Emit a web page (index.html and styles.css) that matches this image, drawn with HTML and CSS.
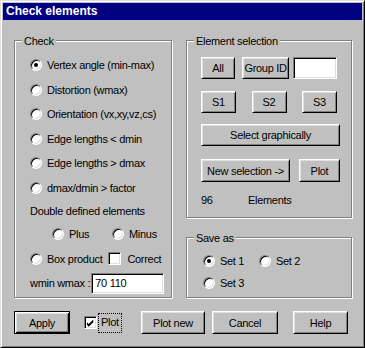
FILE: index.html
```html
<!DOCTYPE html>
<html lang="en">
<head>
  <meta charset="UTF-8" />
  <title>Check elements</title>
  <link rel="stylesheet" href="styles.css">
</head>
<body>
  <div class="window">
    <div class="titlebar">Check elements</div>
    <div class="client">
      <div class="panels">
        <div class="group check-group">
          <span class="legend">Check</span>
          <div class="row"><span class="radio checked"></span>Vertex angle (min-max)</div>
          <div class="row"><span class="radio"></span>Distortion (wmax)</div>
          <div class="row"><span class="radio"></span>Orientation (vx,xy,vz,cs)</div>
          <div class="row"><span class="radio"></span>Edge lengths &lt; dmin</div>
          <div class="row"><span class="radio"></span>Edge lengths &gt; dmax</div>
          <div class="row"><span class="radio"></span>dmax/dmin &gt; factor</div>
          <div class="row short">Double defined elements</div>
          <div class="row pair">
            <span class="opt"><span class="radio"></span>Plus</span>
            <span class="opt"><span class="radio"></span>Minus</span>
          </div>
          <div class="row"><span class="radio"></span>Box product<span class="check"></span>Correct</div>
          <div class="row"><span>wmin wmax :</span><span class="edit wmin">70 110</span></div>
        </div>

        <div class="side">
          <div class="group select-group">
            <span class="legend">Element selection</span>
            <div class="btn-row">
              <button class="btn all-btn">All</button>
              <button class="btn group-btn">Group ID</button>
              <span class="edit group-edit"></span>
            </div>
            <div class="btn-row sets">
              <button class="btn s-btn">S1</button>
              <button class="btn s-btn">S2</button>
              <button class="btn s-btn">S3</button>
            </div>
            <div class="btn-row graph-row">
              <button class="btn graph-btn">Select graphically</button>
            </div>
            <div class="btn-row new-row">
              <button class="btn new-btn">New selection -&gt;</button>
              <button class="btn plot-btn">Plot</button>
            </div>
            <div class="count-row"><span class="count">96</span>Elements</div>
          </div>

          <div class="group save-group">
            <span class="legend">Save as</span>
            <div class="row save-row">
              <span class="opt set-opt"><span class="radio checked"></span>Set 1</span>
              <span class="opt"><span class="radio"></span>Set 2</span>
            </div>
            <div class="row save-row">
              <span class="opt"><span class="radio"></span>Set 3</span>
            </div>
          </div>
        </div>
      </div>

      <div class="actions">
        <button class="btn default apply-btn">Apply</button>
        <span class="plot-toggle">
          <span class="check">
            <svg width="11" height="11" viewBox="0 0 11 11"><path d="M1 4 L3 6 L8 1 L8 4 L3 9 L1 7 Z" fill="#000"/></svg>
          </span>
          <span class="focus">Plot</span>
        </span>
        <button class="btn plotnew-btn">Plot new</button>
        <button class="btn cancel-btn">Cancel</button>
        <button class="btn help-btn">Help</button>
      </div>
    </div>
  </div>
</body>
</html>
```

FILE: styles.css
```css
body {
  margin: 0;
  background: #c0c0c0;
  font-family: "Liberation Sans", Arial, sans-serif;
  font-size: 11px;
  letter-spacing: -0.3px;
  color: #000;
}
.window {
  width: 365px;
  height: 348px;
  box-sizing: border-box;
  border: 1px solid;
  border-color: #dfdfdf #000 #000 #dfdfdf;
  box-shadow: inset 1px 1px #fff, inset -1px -1px #808080;
  padding: 2px;
}
.titlebar {
  height: 17px;
  line-height: 17px;
  padding-left: 3px;
  background: #000080;
  color: white;
  font-size: 12px;
  font-weight: bold;
  letter-spacing: 0;
}
.client {
  padding: 20px 10px 0 11px;
}
.panels {
  display: flex;
  gap: 14px;
}
.group {
  position: relative;
  box-sizing: border-box;
  border: 1px solid #808080;
  box-shadow: inset 1px 1px #fff, 1px 1px #fff;
}
.legend {
  position: absolute;
  top: -7px;
  left: 7px;
  padding: 0 2px;
  line-height: 14px;
  background: #c0c0c0;
}
.check-group {
  width: 158px;
  height: 258px;
  padding: 12px 0 0 15px;
}
.row {
  display: flex;
  align-items: center;
  height: 24.5px;
  white-space: nowrap;
}
.row.short { height: 22px; }
.opt {
  display: flex;
  align-items: center;
}
.pair .opt:first-child {
  margin-left: 22px;
  width: 60px;
}

/* radio buttons and check boxes */
.radio {
  flex: none;
  position: relative;
  width: 12px;
  height: 12px;
  box-sizing: border-box;
  margin-right: 5px;
  border-radius: 50%;
  background: white;
  border: 1px solid;
  border-color: #808080 #fff #fff #808080;
  box-shadow: inset 1px 1px #000, inset -1px -1px #dfdfdf;
}
.radio.checked::after {
  content: "";
  position: absolute;
  left: 3px;
  top: 3px;
  width: 4px;
  height: 4px;
  border-radius: 50%;
  background: #000;
}
.check {
  flex: none;
  display: inline-flex;
  width: 13px;
  height: 13px;
  box-sizing: border-box;
  background: white;
  border: 1px solid;
  border-color: #808080 #fff #fff #808080;
  box-shadow: inset 1px 1px #000, inset -1px -1px #dfdfdf;
  padding: 1px 0 0 1px;
}
.row .check {
  margin: 0 6px 0 6px;
}
.edit {
  display: flex;
  align-items: center;
  box-sizing: border-box;
  background: white;
  border: 1px solid;
  border-color: #808080 #fff #fff #808080;
  box-shadow: inset 1px 1px #000, inset -1px -1px #dfdfdf;
  padding-left: 3px;
}
.wmin {
  width: 73px;
  height: 21px;
  margin-left: 1px;
}

/* push buttons */
.btn {
  box-sizing: border-box;
  height: 22px;
  padding: 0;
  font: inherit;
  letter-spacing: inherit;
  white-space: nowrap;
  color: #000;
  background: #c0c0c0;
  border: 1px solid;
  border-color: #fff #000 #000 #fff;
  box-shadow: inset 1px 1px #dfdfdf, inset -1px -1px #808080;
}
.btn.default {
  border: 1px solid #000;
  box-shadow: inset 1px 1px #fff, inset -1px -1px #000, inset 2px 2px #dfdfdf, inset -2px -2px #808080;
}

.side {
  width: 166px;
  display: flex;
  flex-direction: column;
  gap: 19px;
}
.select-group {
  height: 178px;
  padding: 16px 0 0 14px;
}
.btn-row {
  display: flex;
}
.all-btn { width: 34px; }
.group-btn { width: 47px; margin-left: 7px; }
.group-edit { width: 44px; height: 22px; margin-left: 4px; }
.sets { margin-top: 12px; }
.s-btn { width: 35px; }
.s-btn + .s-btn { margin-left: 15.5px; }
.graph-row { margin-top: 11px; }
.graph-btn { width: 139px; }
.new-row { margin-top: 13px; }
.new-btn { width: 89px; height: 23px; }
.plot-btn { width: 41px; height: 23px; margin-left: 9px; }
.count-row {
  margin-top: 11px;
  line-height: 14px;
}
.count {
  display: inline-block;
  width: 47px;
}

.save-group {
  height: 61px;
  padding: 12px 0 0 16px;
}
.save-row { height: 22px; }
.set-opt { width: 56px; }

.actions {
  display: flex;
  align-items: center;
  margin-top: 13px;
}
.apply-btn { width: 56px; height: 23px; }
.plot-toggle {
  display: flex;
  align-items: center;
  width: 57px;
  margin-left: 14px;
}
.focus {
  margin-left: 1px;
  padding: 1px 2px 2px;
  line-height: 15px;
  border: 1px dotted #000;
}
.plotnew-btn { width: 64px; height: 23px; }
.cancel-btn { width: 66px; height: 23px; margin-left: 7px; }
.help-btn { width: 55px; height: 23px; margin-left: 15px; }
```
